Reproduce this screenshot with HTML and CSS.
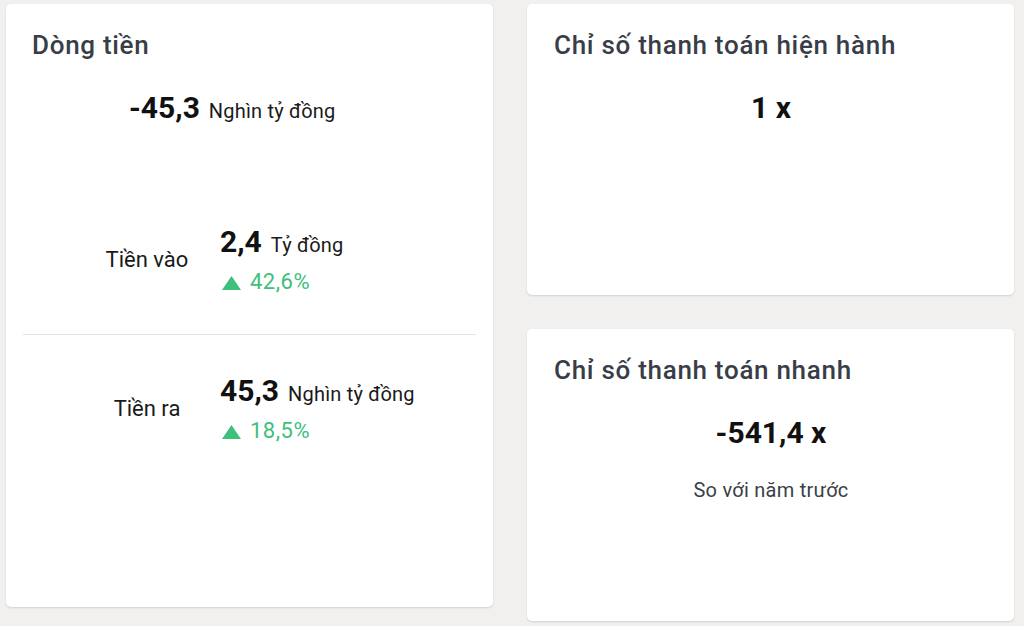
FILE: index.html
```html
<!DOCTYPE html>
<html lang="vi">
<head>
<meta charset="utf-8">
<title>Dòng tiền</title>
<link rel="stylesheet" href="styles.css">
</head>
<body>
<div class="dashboard">
  <section class="card card-flow">
    <h2 class="card-title">Dòng tiền</h2>
    <div class="total">
      <span class="big">-45,3</span>
      <span class="unit">Nghìn tỷ đồng</span>
    </div>
    <div class="flows">
      <div class="flow">
        <div class="flow-label">Tiền vào</div>
        <div class="flow-values">
          <div class="flow-main"><span class="big">2,4</span><span class="unit">Tỷ đồng</span></div>
          <div class="flow-change">
            <svg class="tri" width="19" height="14" viewBox="0 0 19 14"><polygon points="9.5,0 19,14 0,14" fill="currentColor"/></svg>
            <span>42,6%</span>
          </div>
        </div>
      </div>
      <div class="flow flow-out">
        <div class="flow-label">Tiền ra</div>
        <div class="flow-values">
          <div class="flow-main"><span class="big">45,3</span><span class="unit">Nghìn tỷ đồng</span></div>
          <div class="flow-change">
            <svg class="tri" width="19" height="14" viewBox="0 0 19 14"><polygon points="9.5,0 19,14 0,14" fill="currentColor"/></svg>
            <span>18,5%</span>
          </div>
        </div>
      </div>
    </div>
  </section>
  <div class="right-col">
    <section class="card card-ratio">
      <h2 class="card-title">Chỉ số thanh toán hiện hành</h2>
      <div class="ratio-value"><span class="big">1 x</span></div>
    </section>
    <section class="card card-ratio card-quick">
      <h2 class="card-title">Chỉ số thanh toán nhanh</h2>
      <div class="ratio-value"><span class="big">-541,4 x</span></div>
      <div class="ratio-note">So với năm trước</div>
    </section>
  </div>
</div>
</body>
</html>
```

FILE: styles.css
```css
* { box-sizing: border-box; }

html, body {
  margin: 0;
  padding: 0;
  background: #f1f0ef;
  font-family: Roboto, "Noto Sans", "Liberation Sans", sans-serif;
  color: #161616;
}

.dashboard {
  display: grid;
  grid-template-columns: 487px 487px;
  column-gap: 34px;
  padding: 4px 10px 0 6px;
  height: 626px;
  align-items: start;
}

.card {
  background: #ffffff;
  border-radius: 5px;
  box-shadow: 0 1px 2px rgba(0, 0, 0, 0.13);
}

.card-title {
  margin: 0;
  font-size: 26px;
  line-height: 30px;
  font-weight: 500;
  letter-spacing: 0.7px;
  color: #383d47;
}

.big {
  font-size: 30px;
  line-height: 36px;
  font-weight: 700;
  letter-spacing: 0;
  color: #111111;
}

.unit {
  font-size: 20px;
  font-weight: 400;
  letter-spacing: 0.2px;
  color: #1a1a1a;
}

/* Left card */
.card-flow {
  height: 603px;
  padding: 26px 17px 0 17px;
}

.card-flow .card-title {
  padding-left: 9px;
}

.total {
  display: flex;
  align-items: baseline;
  gap: 9px;
  margin-top: 30px;
  padding-left: 106px;
}

.flows {
  margin-top: 60px;
}

.flow {
  display: grid;
  grid-template-columns: 132px 1fr;
  column-gap: 7px;
  align-items: center;
  height: 148px;
  padding-left: 58px;
}

.flow-out {
  border-top: 1px solid #e3e3e3;
  height: 149px;
}

.flow-label {
  text-align: center;
  font-size: 22px;
  line-height: 28px;
  color: #1a1a1a;
}

.flow-values {
  display: flex;
  flex-direction: column;
}

.flow-main {
  display: flex;
  align-items: baseline;
  gap: 9px;
}

.flow-change {
  display: flex;
  align-items: center;
  gap: 9px;
  margin-top: 8px;
  font-size: 22px;
  line-height: 28px;
  letter-spacing: 0.5px;
  color: #3ec07c;
}

.tri {
  display: block;
  margin-top: 1px;
  margin-left: 2px;
}

/* Right column */
.right-col {
  display: flex;
  flex-direction: column;
  gap: 34px;
}

.card-ratio {
  height: 291px;
  padding: 26px 26px 0 27px;
}

.card-quick {
  height: 292px;
}

.ratio-value {
  margin-top: 30px;
  text-align: center;
  line-height: 36px;
}

.ratio-note {
  margin-top: 20px;
  text-align: center;
  font-size: 20px;
  line-height: 28px;
  letter-spacing: 0.25px;
  color: #3a3f48;
}
```
